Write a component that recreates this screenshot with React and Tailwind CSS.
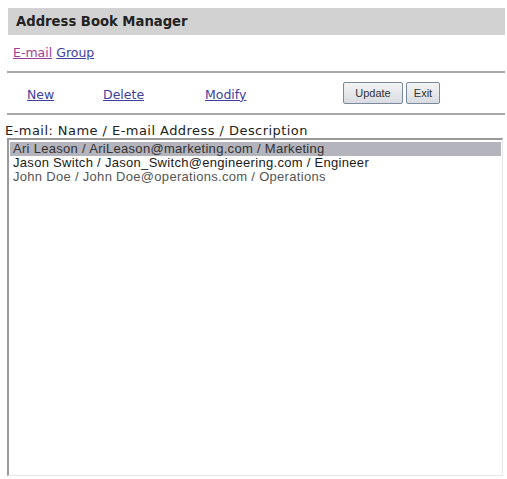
import React from "react";

export default function App() {
  const items = [
    { text: "Ari Leason / AriLeason@marketing.com / Marketing", sel: true },
    { text: "Jason Switch / Jason_Switch@engineering.com / Engineer", sel: false },
    { text: "John Doe / John Doe@operations.com / Operations", sel: false },
  ];
  return (
    <div className="w-[507px] h-[479px] bg-white overflow-hidden font-['DejaVu_Sans',sans-serif]">
      <div className="pl-[8px] pr-[2px] pt-[8px]">
        <div className="h-[27px] bg-[#d2d2d2] flex items-center pl-[8px] text-[13.2px] font-bold text-[#222]">
          Address Book Manager
        </div>
        <div className="h-[36px] flex items-center pl-[5px] text-[12.5px] gap-[4px]">
          <a className="underline text-[#a0409a]">E-mail</a>
          <a className="underline text-[#4040a0]">Group</a>
        </div>
      </div>
      <div className="ml-[7px] mr-[2px] border-t-2 border-[#a8a8a8]" />
      <div className="h-[40px] flex items-center pt-[4px] pl-[27px] pr-[2px] text-[12.5px]">
        <a className="underline text-[#4040a0] w-[76px]">New</a>
        <a className="underline text-[#4040a0] w-[102px]">Delete</a>
        <a className="underline text-[#4040a0] w-[138px]">Modify</a>
        <div className="flex gap-[3px] -mt-[4px] font-['Liberation_Sans',sans-serif] text-[11px] text-[#333]">
          <button className="h-[22px] w-[60px] border border-[#7a8a9a] rounded-[2px] bg-gradient-to-b from-[#f4f4f4] to-[#d8dce2]">Update</button>
          <button className="h-[22px] w-[34px] border border-[#7a8a9a] rounded-[2px] bg-gradient-to-b from-[#f4f4f4] to-[#d8dce2]">Exit</button>
        </div>
      </div>
      <div className="ml-[7px] mr-[2px] border-t-2 border-[#a8a8a8]" />
      <div className="pl-[5px] pt-[8px] text-[13px] tracking-[0.45px] leading-[15px] text-[#222]">
        E-mail: Name / E-mail Address / Description
      </div>
      <div className="ml-[7px] mr-[4px] h-[338px] border-t-2 border-l-2 border-[#9a9a9a] border-r border-b border-r-[#e8e8e8] border-b-[#e8e8e8] pt-[2px] px-[1px] font-['Liberation_Sans',sans-serif] text-[13px] tracking-[0.3px]">
        {items.map((it, i) => (
          <div
            key={i}
            className={
              "h-[14px] leading-[14px] pl-[3px] " +
              (it.sel ? "bg-[#b4b4bc] text-[#333]" : i === 1 ? "text-[#1a1a1a]" : "text-[#555]")
            }
          >
            {it.text}
          </div>
        ))}
      </div>
    </div>
  );
}
